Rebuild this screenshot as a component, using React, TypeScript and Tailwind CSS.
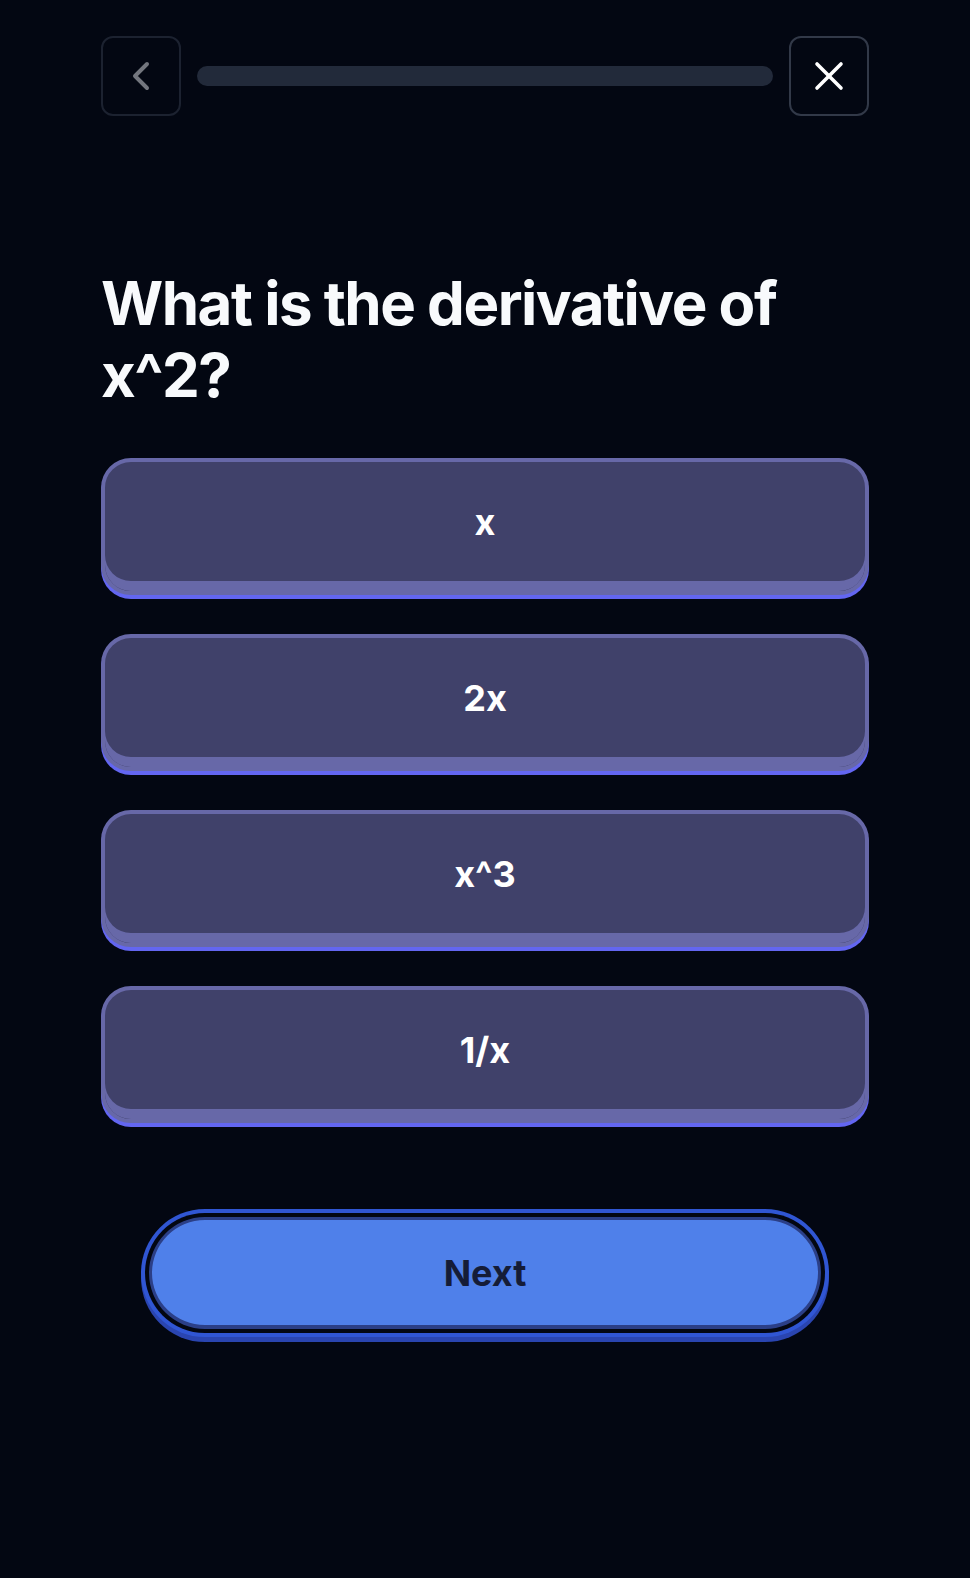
import { ChevronLeft, X } from "lucide-react";

const options = ["x", "2x", "x^3", "1/x"];

const Option: React.FC<{ label: string }> = ({ label }) => {
    return (
        <button
            className="flex h-[137px] w-full items-center justify-center rounded-[30px] border-4 border-[#6768a8] bg-[#40416a] pb-[10px] text-4xl font-bold text-white shadow-[inset_0_-10px_0_#6768a8,0_4px_0_#6366f1]"
        >
            {label}
        </button>
    );
};

export default function App() {
    return (
        <div
            className="min-h-[1578px] w-full bg-[#030712]"
            style={{ fontFamily: "Inter, 'Noto Sans', sans-serif" }}
        >
            <div className="mx-auto flex max-w-3xl flex-col pt-9">
                {/* top bar */}
                <div className="flex items-center gap-4">
                    <button className="flex size-20 shrink-0 items-center justify-center rounded-xl border-2 border-[#1c2230] text-[#73767e]">
                        <ChevronLeft size={48} strokeWidth={2} />
                    </button>
                    <div className="h-5 flex-1 rounded-full bg-[#222a3a]"></div>
                    <button className="flex size-20 shrink-0 items-center justify-center rounded-xl border-2 border-[#323948] text-white">
                        <X size={48} strokeWidth={1.8} />
                    </button>
                </div>

                <h1 className="mt-[151px] text-[60px] font-bold leading-[72px] tracking-tight text-[#f8fafc]">
                    What is the derivative of x^2?
                </h1>

                <div className="mt-[47px] flex flex-col gap-[39px]">
                    {options.map((o) => (
                        <Option key={o} label={o} />
                    ))}
                </div>
            </div>

            <div className="mx-auto mt-[94px] max-w-2xl">
                <button className="flex h-28 w-full items-center justify-center rounded-full border-[3px] border-b-4 border-[#2b3f87] bg-[#4f80ea] text-4xl font-bold text-[#151c37] shadow-[0_5px_0_8px_#2a45b0] ring-4 ring-[#3056d3] ring-offset-4 ring-offset-[#030712]">
                    Next
                </button>
            </div>
        </div>
    );
}
